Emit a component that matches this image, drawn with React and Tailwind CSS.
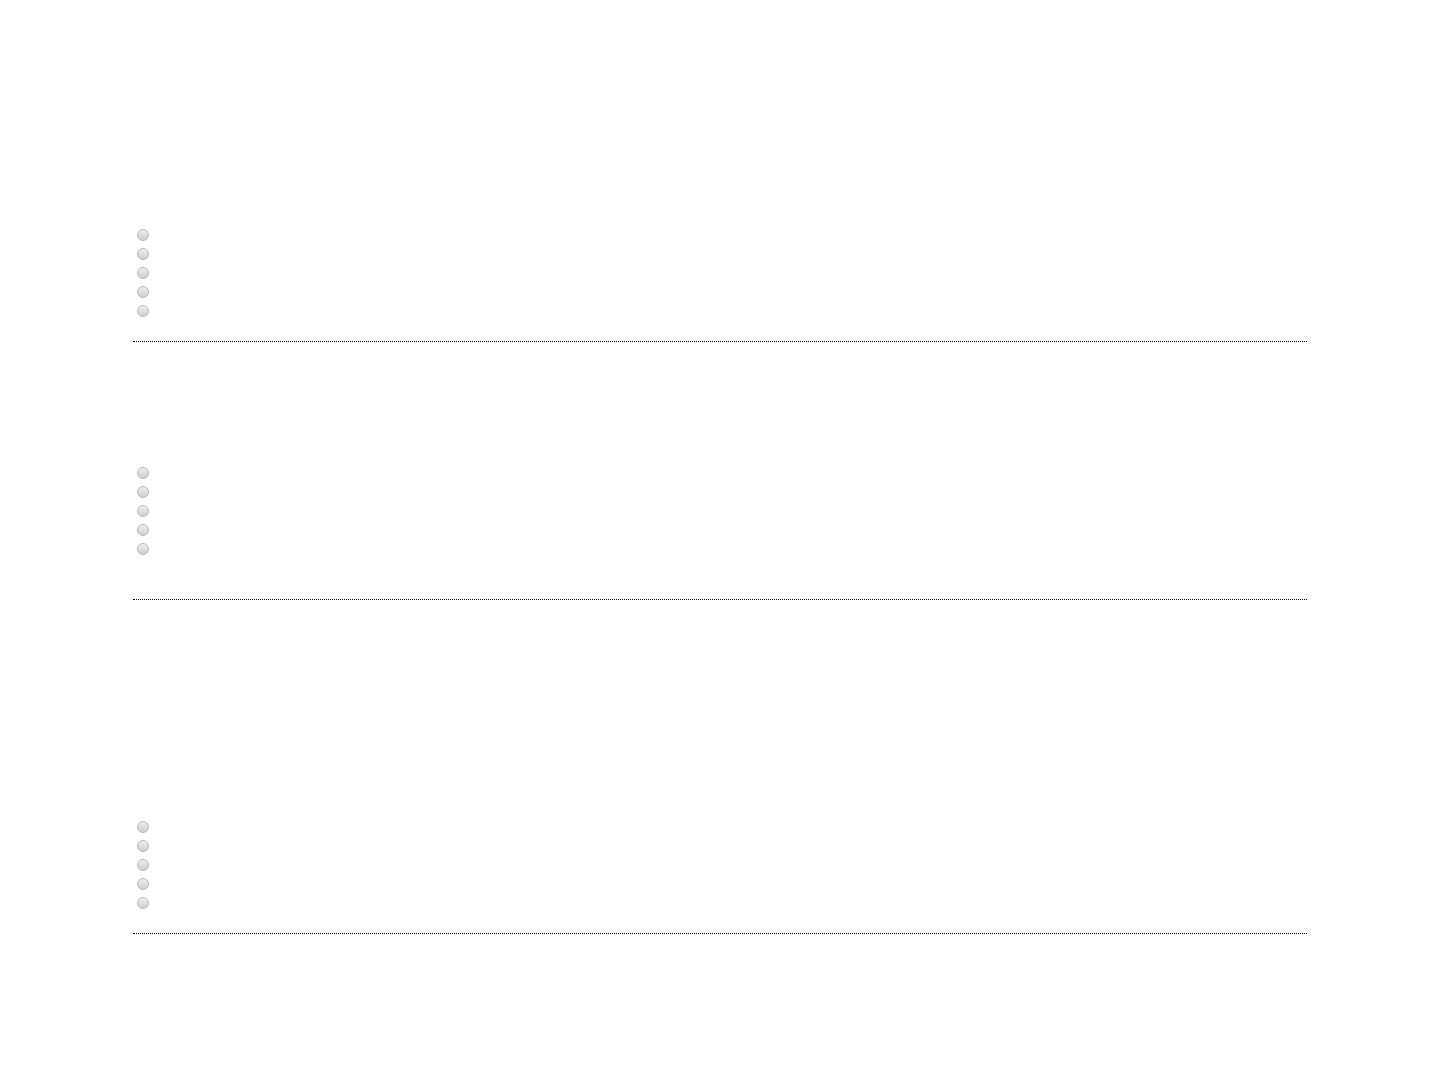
const groups = [
  { gapTop: 'pt-[225px]', gapBottom: 'mt-[21px]' },
  { gapTop: 'pt-[121px]', gapBottom: 'mt-[41px]' },
  { gapTop: 'pt-[217px]', gapBottom: 'mt-[21px]' },
];

function Radio() {
  return (
    <div className="flex h-[19px] items-center">
      <span className="ml-[4px] block h-3 w-3 rounded-full border border-[#b8b8b8] bg-gradient-to-b from-[#efefef] to-[#cfcfcf]" />
    </div>
  );
}

export default function App() {
  return (
    <div className="h-[1080px] overflow-hidden bg-white font-['Liberation_Sans',sans-serif]">
      <div className="mx-auto w-[1174px]">
        {groups.map((g, i) => (
          <div key={i} className={g.gapTop}>
            {[0, 1, 2, 3, 4].map(n => (
              <Radio key={n} />
            ))}
            <div className={`${g.gapBottom} border-b border-dotted border-[#111]`} />
          </div>
        ))}
      </div>
    </div>
  );
}
